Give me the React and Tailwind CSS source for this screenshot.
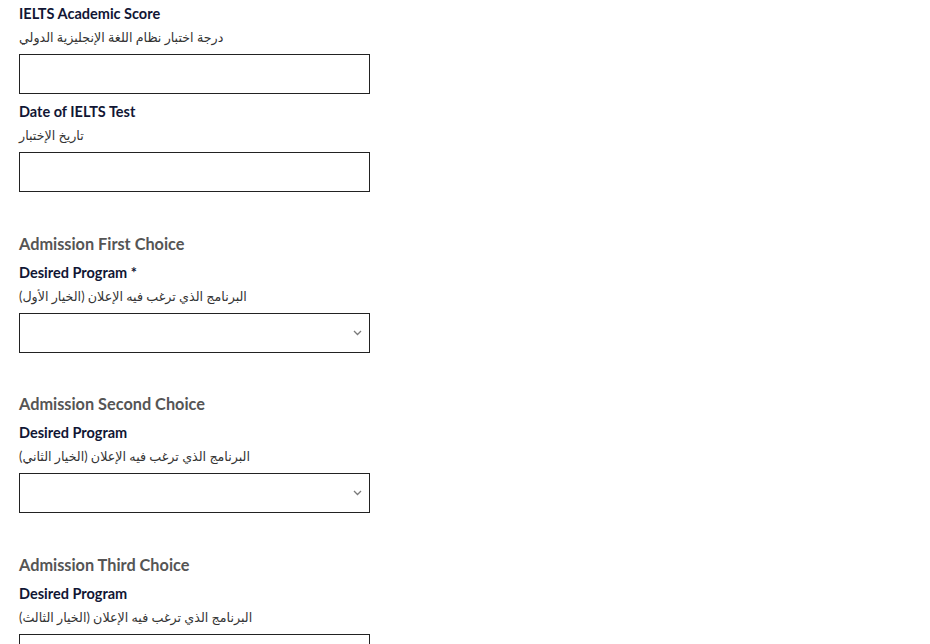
import React from "react";

const Chevron = () => (
  <svg width="9" height="6" viewBox="0 0 9 6" className="absolute right-[7px] top-[16px]">
    <path d="M1 1l3.5 3.5L8 1" fill="none" stroke="#7a7a7a" strokeWidth="1.3" />
  </svg>
);

const Field = ({ label, arabic, select, first }) => (
  <div className={first ? "" : "mt-[8px]"}>
    <div className="text-[14.5px] leading-[20px] font-bold text-[#111634]">{label}</div>
    <div className="mt-[3px] text-[12.7px] leading-[20px] text-[#333]">
      <span dir="rtl">{arabic}</span>
    </div>
    <div className="relative mt-[7px] h-[40px] w-[351px] border border-[#222] bg-white">
      {select && <Chevron />}
    </div>
  </div>
);

const Heading = ({ children, tight }) => (
  <div
    className={`${tight ? "mt-[39px]" : "mt-[40px]"} mb-[7px] text-[16.3px] leading-[24px] font-bold text-[#555]`}
  >
    {children}
  </div>
);

export default function App() {
  return (
    <div
      className="h-[644px] w-[930px] overflow-hidden bg-white pl-[19px] pt-[4px]"
      style={{ fontFamily: "Lato, 'Noto Sans', 'DejaVu Sans', sans-serif" }}
    >
      <Field first label="IELTS Academic Score" arabic="درجة اختبار نظام اللغة الإنجليزية الدولي" />
      <Field label="Date of IELTS Test" arabic="تاريخ الإختبار" />
      <Heading>Admission First Choice</Heading>
      <Field first select label="Desired Program *" arabic="البرنامج الذي ترغب فيه الإعلان (الخيار الأول)" />
      <Heading tight>Admission Second Choice</Heading>
      <Field first select label="Desired Program" arabic="البرنامج الذي ترغب فيه الإعلان (الخيار الثاني)" />
      <Heading>Admission Third Choice</Heading>
      <Field first select label="Desired Program" arabic="البرنامج الذي ترغب فيه الإعلان (الخيار الثالث)" />
    </div>
  );
}
